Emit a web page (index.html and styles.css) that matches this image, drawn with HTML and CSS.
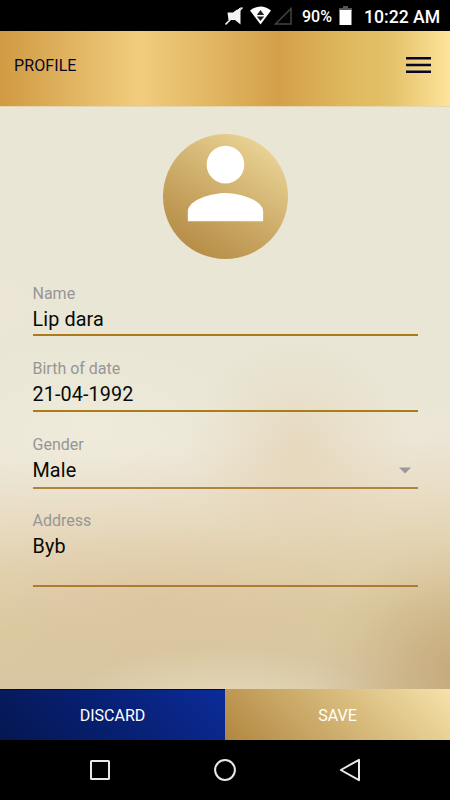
FILE: index.html
```html
<!DOCTYPE html>
<html lang="en">
<head>
<meta charset="utf-8">
<title>Profile</title>
<link rel="stylesheet" href="styles.css">
</head>
<body>
<div class="screen">
  <div class="status">
    <svg class="status-icons" width="70" height="31" viewBox="0 0 70 31">
      <path d="M2.500 12.500H8L15.500 7v17.500L10 20H3.500z" fill="#f4f4f4"/>
      <path d="M0.500 24.500L17.500 7.500" stroke="#eee" stroke-width="1.600"/>
      <path d="M12.500 9.500L16 6" stroke="#000" stroke-width="1"/>
      <path d="M25 10.500Q35.500 2.500 46 10.500L35.500 24.500z" fill="#fff"/>
      <path d="M35.500 10l3.700 5h-7.400zM31.800 16.500h7.400l-3.700 4.500z" fill="#222"/>
      <path d="M50.500 24H66V8.500z" fill="none" stroke="#444" stroke-width="1.500"/>
    </svg>
    <span class="percent">90%</span>
    <svg class="battery" width="13" height="20" viewBox="0 0 13 20"><path d="M4 0h5v2h4v3H0V2h4z" fill="#555"/><path d="M0.500 4h12v15h-12z" fill="#fff"/></svg>
    <span class="clock">10:22 AM</span>
  </div>
  <header class="header">
    <h1 class="title">PROFILE</h1>
    <svg class="menu" width="25" height="18" viewBox="0 0 25 18"><path d="M0 2.200h25M0 9h25M0 15.800h25" stroke="#060626" stroke-width="2.500"/></svg>
  </header>
  <main class="content">
    <div class="avatar">
      <svg width="113" height="113" viewBox="0 0 24 24"><path fill="#fff" d="M12 12c2.210 0 4-1.790 4-4s-1.790-4-4-4-4 1.790-4 4 1.790 4 4 4zm0 2c-2.670 0-8 1.340-8 4v2h16v-2c0-2.660-5.330-4-8-4z"/></svg>
    </div>
    <div class="field name"><span class="label">Name</span><span class="value">Lip dara</span></div>
    <div class="field date"><span class="label">Birth of date</span><span class="value">21-04-1992</span></div>
    <div class="field gender"><span class="label">Gender</span><span class="value select">Male<svg width="12" height="7" viewBox="0 0 12 7"><path d="M0 0.500h12l-6 6z" fill="#999"/></svg></span></div>
    <div class="field address"><span class="label">Address</span><span class="value">Byb</span></div>
  </main>
  <div class="actions">
    <div class="action discard">DISCARD</div>
    <div class="action save">SAVE</div>
  </div>
  <nav class="nav">
    <svg width="26" height="26" viewBox="0 0 26 26"><rect x="4" y="4" width="18" height="18" rx="0.500"/></svg>
    <svg width="26" height="26" viewBox="0 0 26 26"><circle cx="13" cy="13" r="9.900"/></svg>
    <svg width="26" height="26" viewBox="0 0 26 26"><path d="M22 2.800v20.400L3.800 13z"/></svg>
  </nav>
</div>
</body>
</html>
```

FILE: styles.css
```css
* { box-sizing: border-box; }
body { margin: 0; font-family: Roboto, "Liberation Sans", sans-serif; background: #000; }
.screen { width: 450px; height: 800px; display: flex; flex-direction: column; overflow: hidden; }
.status { height: 31px; background: #000; color: #fff; display: flex; align-items: center; justify-content: flex-end; padding-right: 10px; font-weight: 500; }
.percent { font-size: 16px; margin-left: 7px; padding-top: 2px; width: 37px; white-space: nowrap; }
.battery { margin-right: 12px; }
.clock { font-size: 17.6px; width: 76px; padding-top: 2px; white-space: nowrap; }
.header { height: 76px; display: flex; align-items: center; justify-content: space-between; padding: 0 19px 7px 14px; border-bottom: 1px solid #e6d6ad; background: linear-gradient(90deg, #d09a43 0%, #f0cd7d 31%, #d4a04a 62%, #dfb85d 77%, #e3c26a 87%, #ffe39a 100%); }
.title { margin: 0; font-size: 16px; font-weight: 400; color: #060626; letter-spacing: .1px; }
.content { height: 582px; padding: 26.5px 32.5px 0; background:
  radial-gradient(ellipse 150px 130px at 103% 97%, rgba(188,153,100,.68), rgba(188,153,100,.4) 35%, rgba(188,153,100,.1) 75%, rgba(188,153,100,0)),
  radial-gradient(ellipse 170px 65px at 50% 104%, rgba(237,225,196,.85), rgba(237,225,196,.35) 55%, rgba(237,225,196,0)),
  radial-gradient(ellipse 110px 110px at 66% 59%, rgba(226,203,168,.5), rgba(226,203,168,.22) 50%, rgba(226,203,168,0)),
  radial-gradient(ellipse 210px 80px at 35% 85%, rgba(219,188,155,.35), rgba(219,188,155,.15) 55%, rgba(219,188,155,0)),
  radial-gradient(ellipse 180px 90px at 20% 54%, rgba(241,237,222,.65), rgba(241,237,222,.25) 55%, rgba(241,237,222,0)),
  radial-gradient(ellipse 120px 120px at 0% 34%, rgba(239,231,215,.45), rgba(239,231,215,.15) 50%, rgba(239,231,215,0)),
  linear-gradient(177deg, #e9e6d6 0%, #e9e6d5 48%, #ece6d6 58%, #e9ddc5 67%, #e2d1ae 77%, #dac9a0 87%, #d6c5a2 100%); }
.avatar { width: 125px; height: 125px; margin: 0 auto 24.5px; border-radius: 50%; display: flex; justify-content: center; background: linear-gradient(33deg, #b48b45 10%, #c9a662 42%, #ecd79a 92%); }
.avatar svg { flex: none; margin-top: -6.5px; }
.field { display: flex; flex-direction: column; border-bottom: 2px solid #ad7b19; }
.label { font-size: 16px; line-height: 20px; padding-top: 1px; color: #969696; }
.value { margin-top: 1.500px; font-size: 19.8px; line-height: 27px; color: #080808; letter-spacing: .1px; }
.select { display: flex; align-items: center; justify-content: space-between; padding-right: 6.5px; }
.name { height: 53px; margin-bottom: 22px; }
.date { height: 54px; margin-bottom: 22px; }
.gender { height: 55px; margin-bottom: 21px; border-color: #af8440; }
.address { height: 77px; border-color: #ad7d2d; }
.actions { display: flex; height: 51px; }
.action { flex: 1; display: flex; align-items: center; justify-content: center; padding-top: 2px; color: #fff; font-size: 16px; }
.discard { background: linear-gradient(45deg, #051650, #0b2b99); box-shadow: inset 0 1px #00007c; }
.save { background: linear-gradient(45deg, #b18740, #f5e2aa); }
.nav { height: 60px; background: #000; display: flex; justify-content: center; align-items: center; gap: 99px; }
.nav svg { fill: none; stroke: #e8e8e8; stroke-width: 2; stroke-linejoin: round; }
```
